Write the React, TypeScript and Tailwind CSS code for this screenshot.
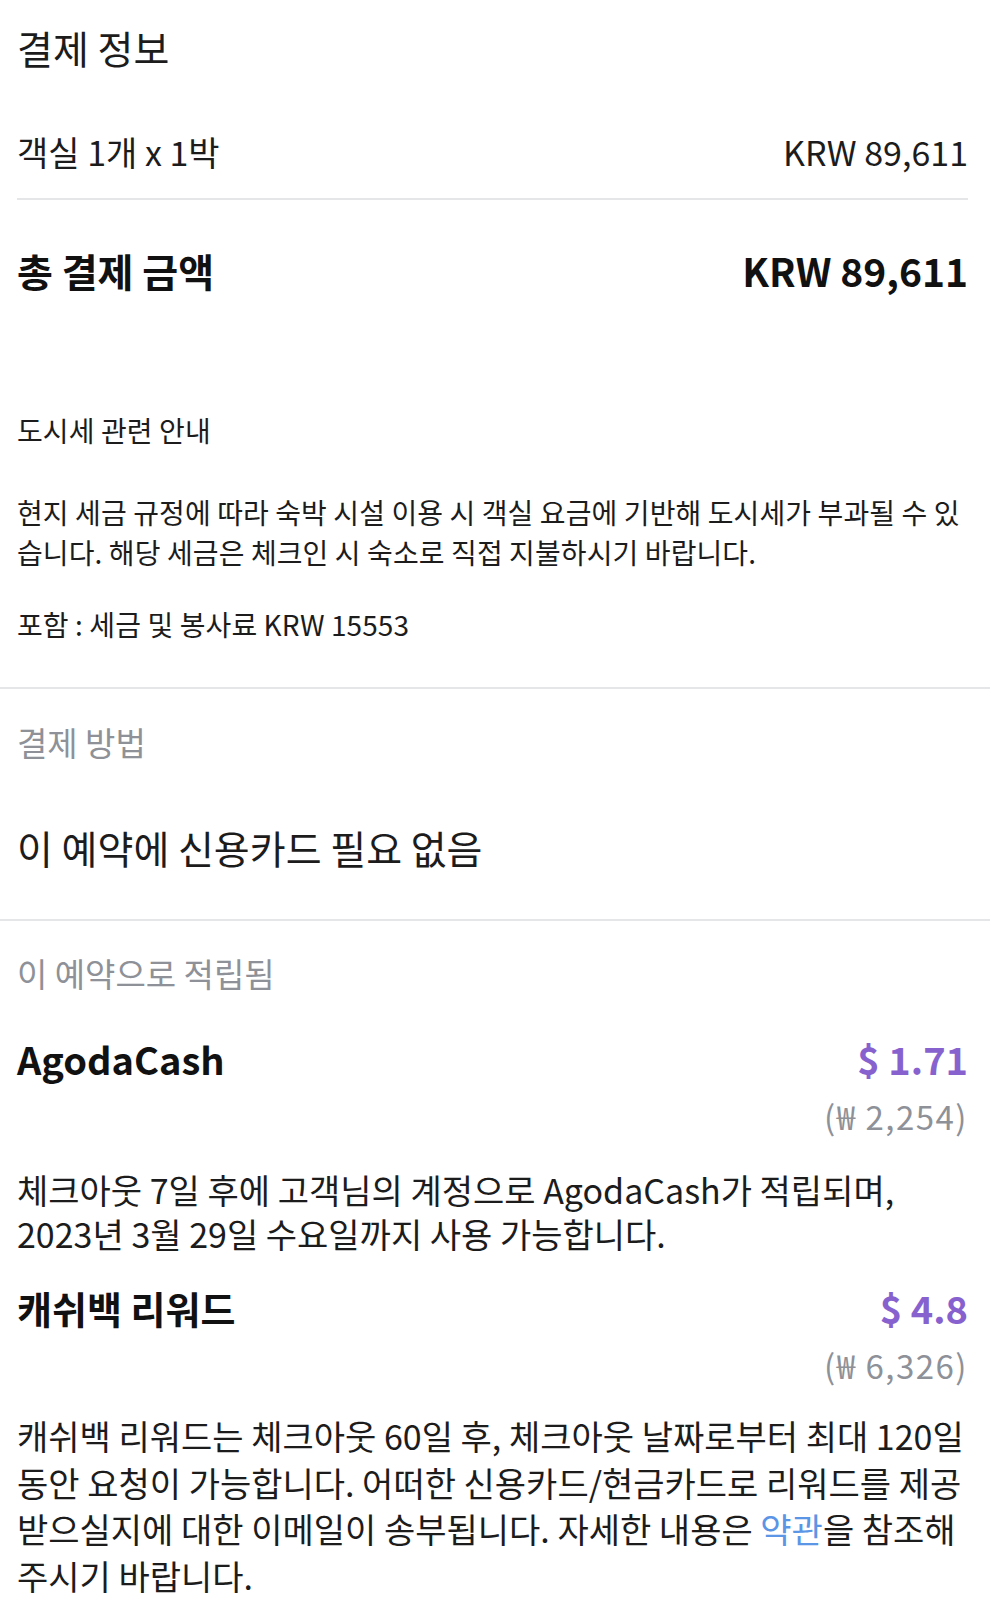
import { ReactNode } from 'react'

function AmountRow({ label, amount, bold }: { label: string; amount: string; bold?: boolean }) {
  return (
    <div className="flex items-center justify-between">
      <span>{label}</span>
      <span className={bold ? 'font-bold' : ''}>{amount}</span>
    </div>
  )
}

function Reward({ title, usd, krw, children }: { title: string; usd: string; krw: string; children: ReactNode }) {
  return (
    <div>
      <div className="flex items-center justify-between leading-[50px] text-[38px] font-bold">
        <span className="text-[#111]">{title}</span>
        <span className="text-[#8762cf]">{usd}</span>
      </div>
      <div className="mt-[12px] text-right text-[33px] leading-[40px] tracking-[1.5px] text-[#8e9197]">{krw}</div>
      {children}
    </div>
  )
}

export default function App() {
  return (
    <div className="min-h-[1615px] bg-white text-[#1c1c1c] font-['Noto_Sans_CJK_KR',sans-serif]">
      {/* 결제 정보 */}
      <section className="pl-[17px] pr-[22px] pt-[23px]">
        <h1 className="text-[39px] leading-[48px] font-normal">결제 정보</h1>
        <div className="mt-[61px] text-[34px] leading-[40px]">
          <AmountRow label="객실 1개 x 1박" amount="KRW 89,611" />
        </div>
        <div className="mt-[26px] h-[2px] bg-[#e4e6e8]" />
        <div className="mt-[45px] text-[39px] leading-[50px] font-bold text-[#111]">
          <AmountRow label="총 결제 금액" amount="KRW 89,611" bold />
        </div>
        <div className="text-[28px] tracking-[0.1px]">
          <p className="mt-[117px] leading-[36px]">도시세 관련 안내</p>
          <p className="mt-[44px] leading-[40px]">
            현지 세금 규정에 따라 숙박 시설 이용 시 객실 요금에 기반해 도시세가 부과될 수 있습니다. 해당 세금은 체크인 시 숙소로 직접 지불하시기 바랍니다.
          </p>
          <p className="mt-[32px] leading-[40px]">포함 : 세금 및 봉사료 KRW 15553</p>
        </div>
      </section>

      <div className="mt-[43px] h-[2px] bg-[#e4e6e8]" />

      {/* 결제 방법 */}
      <section className="pl-[17px] pr-[22px]">
        <p className="mt-[33px] text-[33px] leading-[40px] text-[#8e9197]">결제 방법</p>
        <p className="mt-[61px] text-[39px] leading-[48px]">이 예약에 신용카드 필요 없음</p>
      </section>

      <div className="mt-[48px] h-[2px] bg-[#e4e6e8]" />

      {/* 적립 */}
      <section className="pl-[17px] pr-[22px] pb-[15px]">
        <p className="mt-[32px] text-[33px] leading-[40px] text-[#8e9197]">이 예약으로 적립됨</p>
        <div className="mt-[41px]">
          <Reward title="AgodaCash" usd="$ 1.71" krw="(₩ 2,254)">
            <p className="mt-[32px] text-[34px] leading-[44px]">
              체크아웃 7일 후에 고객님의 계정으로 AgodaCash가 적립되며, 2023년 3월 29일 수요일까지 사용 가능합니다.
            </p>
          </Reward>
        </div>
        <div className="mt-[27px]">
          <Reward title="캐쉬백 리워드" usd="$ 4.8" krw="(₩ 6,326)">
            <p className="mt-[28px] text-[34px] leading-[46.5px]">
              캐쉬백 리워드는 체크아웃 60일 후, 체크아웃 날짜로부터 최대 120일 동안 요청이 가능합니다. 어떠한 신용카드/현금카드로 리워드를 제공 받으실지에 대한 이메일이 송부됩니다. 자세한 내용은{' '}
              <a className="text-[#5a95e6]">약관</a>을 참조해 주시기 바랍니다.
            </p>
          </Reward>
        </div>
      </section>
    </div>
  )
}
